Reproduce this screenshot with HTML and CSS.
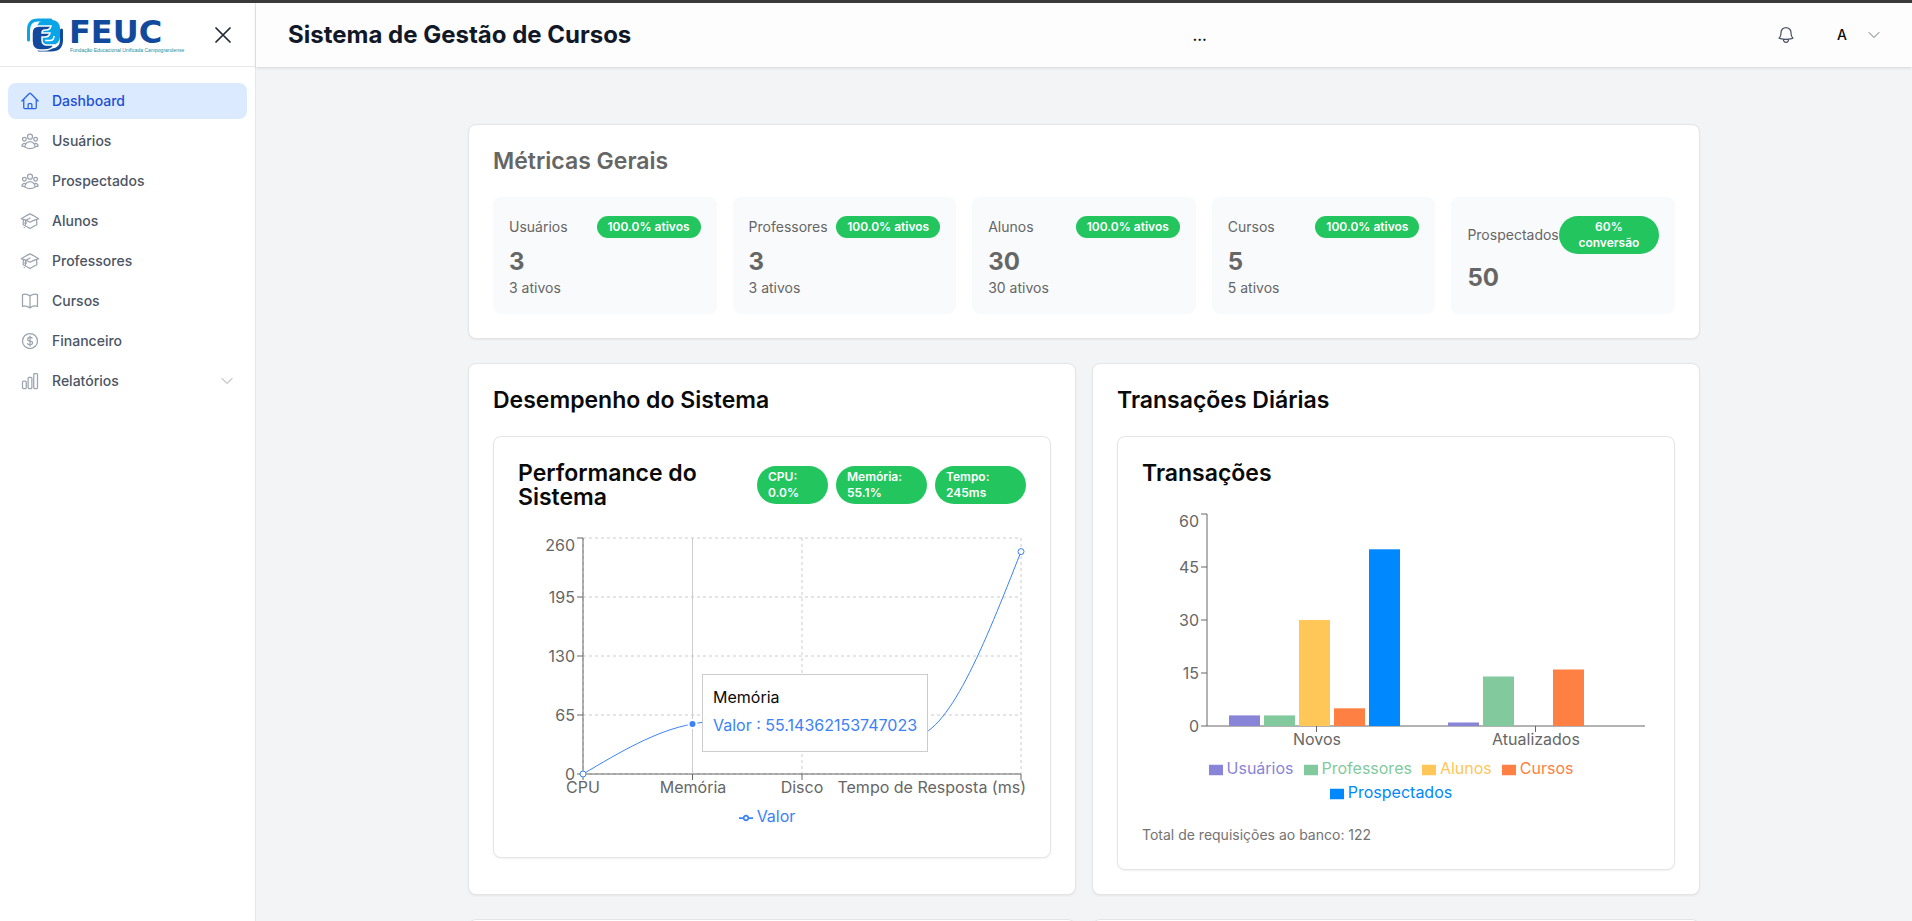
FILE: index.html
```html
<!DOCTYPE html>
<html lang="pt-BR">
<head>
<meta charset="utf-8">
<meta name="viewport" content="width=device-width, initial-scale=1">
<title>Sistema de Gestão de Cursos</title>
<link rel="stylesheet" href="styles.css">
</head>
<body>
<svg class="sprite" aria-hidden="true">
  <symbol id="users" viewBox="0 0 24 24"><path d="M18 18.72a9.094 9.094 0 003.741-.479 3 3 0 00-4.682-2.72m.94 3.198l.001.031c0 .225-.012.447-.037.666A11.944 11.944 0 0112 21c-2.17 0-4.207-.576-5.963-1.584A6.062 6.062 0 016 18.719m12 0a5.971 5.971 0 00-.941-3.197m0 0A5.995 5.995 0 0012 12.75a5.995 5.995 0 00-5.058 2.772m0 0a3 3 0 00-4.681 2.72 8.986 8.986 0 003.74.477m.94-3.197a5.971 5.971 0 00-.94 3.197M15 6.75a3 3 0 11-6 0 3 3 0 016 0zm6 3a2.25 2.25 0 11-4.5 0 2.25 2.25 0 014.5 0zm-13.5 0a2.25 2.25 0 11-4.5 0 2.25 2.25 0 014.5 0z"/></symbol>
  <symbol id="cap" viewBox="0 0 24 24"><path d="M4.26 10.147a60.436 60.436 0 00-.491 6.347A48.627 48.627 0 0112 20.904a48.627 48.627 0 018.232-4.41 60.46 60.46 0 00-.491-6.347m-15.482 0a50.57 50.57 0 00-2.658-.813A59.905 59.905 0 0112 3.493a59.902 59.902 0 0110.399 5.84c-.896.248-1.783.52-2.658.814m-15.482 0A50.697 50.697 0 0112 13.489a50.702 50.702 0 017.74-3.342M6.75 15a.75.75 0 100-1.5.75.75 0 000 1.5zm0 0v-3.675A55.378 55.378 0 0112 8.443m-7.007 11.55A5.981 5.981 0 006.75 15.75v-1.5"/></symbol>
  <symbol id="chevron" viewBox="0 0 24 24"><path d="M19.5 8.25l-7.5 7.5-7.5-7.5"/></symbol>
</svg>
<div class="app">
  <aside class="sidebar">
    <div class="sidebar-head">
      <a class="logo" href="#">
        <svg viewBox="0 0 36 34" width="36" height="34" aria-hidden="true">
          <rect x="10" y="2" width="23" height="25" rx="8" fill="#0aa5e6"/>
          <path d="M1.500 22V12Q1.500 2 11 2H24" fill="none" stroke="#0aa5e6" stroke-width="3" stroke-linecap="round"/>
          <path d="M34.500 12V22Q34.500 32 24 32H12" fill="none" stroke="#114a9c" stroke-width="3" stroke-linecap="round"/>
          <path d="M5 15Q5 8 12 8H24Q23 12 19 12H18Q15 12 15 15H23Q22 19 18 19H15V22Q15 27 20 27H27Q25 32 17 32H13Q5 32 5 23Z" fill="#114a9c" stroke="#fff" stroke-width="1.500"/>
          <path d="M18 22.500H23Q27 22.500 27 18" fill="none" stroke="#fff" stroke-width="1.500"/>
        </svg>
        <span class="logo-text"><span class="logo-name">FEUC</span><span class="logo-sub">Fundação Educacional Unificada Campograndense</span></span>
      </a>
      <button class="icon-btn" type="button" aria-label="Fechar menu">
        <svg class="icon icon-close" viewBox="0 0 24 24"><path d="M6 18L18 6M6 6l12 12"/></svg>
      </button>
    </div>
    <nav class="nav">
      <a class="nav-item active" href="#"><svg class="icon" viewBox="0 0 24 24"><path d="M2.25 12l8.954-8.955c.44-.439 1.152-.439 1.591 0L21.75 12M4.5 9.75v10.125c0 .621.504 1.125 1.125 1.125H9.75v-4.875c0-.621.504-1.125 1.125-1.125h2.25c.621 0 1.125.504 1.125 1.125V21h4.125c.621 0 1.125-.504 1.125-1.125V9.75M8.25 21h8.25"/></svg>Dashboard</a>
      <a class="nav-item" href="#"><svg class="icon"><use href="#users"/></svg>Usuários</a>
      <a class="nav-item" href="#"><svg class="icon"><use href="#users"/></svg>Prospectados</a>
      <a class="nav-item" href="#"><svg class="icon"><use href="#cap"/></svg>Alunos</a>
      <a class="nav-item" href="#"><svg class="icon"><use href="#cap"/></svg>Professores</a>
      <a class="nav-item" href="#"><svg class="icon" viewBox="0 0 24 24"><path d="M12 6.042A8.967 8.967 0 006 3.75c-1.052 0-2.062.18-3 .512v14.25A8.987 8.987 0 016 18c2.305 0 4.408.867 6 2.292m0-14.25a8.966 8.966 0 016-2.292c1.052 0 2.062.18 3 .512v14.25A8.987 8.987 0 0018 18a8.967 8.967 0 00-6 2.292m0-14.25v14.25"/></svg>Cursos</a>
      <a class="nav-item" href="#"><svg class="icon" viewBox="0 0 24 24"><path d="M12 6v12m-3-2.818l.879.659c1.171.879 3.07.879 4.242 0 1.172-.879 1.172-2.303 0-3.182C13.536 12.219 12.768 12 12 12c-.725 0-1.45-.22-2.003-.659-1.106-.879-1.106-2.303 0-3.182s2.9-.879 4.006 0l.415.33M21 12a9 9 0 11-18 0 9 9 0 0118 0z"/></svg>Financeiro</a>
      <button class="nav-item" type="button"><svg class="icon" viewBox="0 0 24 24"><path d="M3 13.125C3 12.504 3.504 12 4.125 12h2.25c.621 0 1.125.504 1.125 1.125v6.75C7.5 20.496 6.996 21 6.375 21h-2.25A1.125 1.125 0 013 19.875v-6.75zM9.75 8.625c0-.621.504-1.125 1.125-1.125h2.25c.621 0 1.125.504 1.125 1.125v11.25c0 .621-.504 1.125-1.125 1.125h-2.25a1.125 1.125 0 01-1.125-1.125V8.625zM16.5 4.125c0-.621.504-1.125 1.125-1.125h2.25C20.496 3 21 3.504 21 4.125v15.75c0 .621-.504 1.125-1.125 1.125h-2.25a1.125 1.125 0 01-1.125-1.125V4.125z"/></svg>Relatórios<svg class="icon icon-small"><use href="#chevron"/></svg></button>
    </nav>
  </aside>

  <div class="page">
    <header class="topbar">
      <h1>Sistema de Gestão de Cursos</h1>
      <span class="topbar-status">...</span>
      <div class="topbar-actions">
        <button class="icon-btn" type="button" aria-label="Notificações"><svg class="icon" viewBox="0 0 24 24"><path d="M14.857 17.082a23.848 23.848 0 005.454-1.31A8.967 8.967 0 0118 9.75v-.7V9A6 6 0 006 9v.75a8.967 8.967 0 01-2.312 6.022c1.733.64 3.56 1.085 5.455 1.31m5.714 0a24.255 24.255 0 01-5.714 0m5.714 0a3 3 0 11-5.714 0"/></svg></button>
        <button class="user-btn" type="button">A<svg class="icon icon-small"><use href="#chevron"/></svg></button>
      </div>
    </header>

    <main class="content">
      <section class="card metrics-card">
        <h2>Métricas Gerais</h2>
        <div class="metrics">
          <div class="metric"><div class="metric-head"><span>Usuários</span><span class="badge">100.0% ativos</span></div><strong>3</strong><p>3 ativos</p></div>
          <div class="metric"><div class="metric-head"><span>Professores</span><span class="badge">100.0% ativos</span></div><strong>3</strong><p>3 ativos</p></div>
          <div class="metric"><div class="metric-head"><span>Alunos</span><span class="badge">100.0% ativos</span></div><strong>30</strong><p>30 ativos</p></div>
          <div class="metric"><div class="metric-head"><span>Cursos</span><span class="badge">100.0% ativos</span></div><strong>5</strong><p>5 ativos</p></div>
          <div class="metric"><div class="metric-head"><span>Prospectados</span><span class="badge">60% conversão</span></div><strong>50</strong></div>
        </div>
      </section>

      <div class="panels">
        <section class="card">
          <h2>Desempenho do Sistema</h2>
          <div class="card">
            <div class="panel-head">
              <h3>Performance do Sistema</h3>
              <div class="badges">
                <span class="badge stacked">CPU:<br>0.0%</span>
                <span class="badge stacked wide">Memória:<br>55.1%</span>
                <span class="badge stacked wide">Tempo:<br>245ms</span>
              </div>
            </div>
            <div class="chart">
              <svg class="plot" viewBox="0 0 508 271" role="img" aria-label="Performance do Sistema">
                <path class="grid" d="M65 241H503M65 182H503M65 123H503M65 64H503M65 5H503M65 5V241M284 5V241M503 5V241"/>
                <path class="axis" d="M65 5V241M65 241H503M59 5H65M59 64H65M59 123H65M59 182H65M59 241H65M65 241V247M174.5 241V247M284 241V247M503 241V247"/>
                <path class="cursor" d="M174.5 5V241"/>
                <path class="line" d="M65 241C101.5 219.3 138 197.6 174.5 191C211 184.4 247.5 181 284 181C320.5 181 357 204 393.5 204C430 204 466.5 111.3 503 18.6"/>
                <circle class="dot" cx="65" cy="241" r="3"/>
                <circle class="dot-active" cx="174.5" cy="191" r="4"/>
                <circle class="dot" cx="503" cy="18.6" r="3"/>
                <g class="ticks end"><text x="57" y="18">260</text><text x="57" y="70">195</text><text x="57" y="129">130</text><text x="57" y="188">65</text><text x="57" y="247">0</text></g>
                <g class="ticks"><text x="65" y="260">CPU</text><text x="175" y="260">Memória</text><text x="284" y="260">Disco</text></g>
                <g class="ticks end"><text x="508" y="260">Tempo de Resposta (ms)</text></g>
              </svg>
              <ul class="legend">
                <li class="c-valor"><svg viewBox="0 0 32 32"><path d="M0 16h10.67A5.33 5.33 0 1 1 21.33 16H32M21.33 16A5.33 5.33 0 1 1 10.67 16" fill="none" stroke="currentColor" stroke-width="4"/></svg>Valor</li>
              </ul>
              <div class="tooltip"><p>Memória</p><p class="c-valor">Valor : 55.14362153747023</p></div>
            </div>
          </div>
        </section>

        <section class="card">
          <h2>Transações Diárias</h2>
          <div class="card">
            <div class="panel-head"><h3>Transações</h3></div>
            <div class="chart">
              <svg class="plot" viewBox="0 0 508 247" role="img" aria-label="Transações">
                <path class="axis" d="M65 5V217M65 217H503M59 5H65M59 58H65M59 111H65M59 164H65M59 217H65M174.5 217V223M393.5 217V223"/>
                <g class="c-usuarios"><rect x="87" y="206.4" width="31" height="10.6"/><rect x="306" y="213.5" width="31" height="3.5"/></g>
                <g class="c-professores"><rect x="122" y="206.4" width="31" height="10.6"/><rect x="341" y="167.5" width="31" height="49.5"/></g>
                <g class="c-alunos"><rect x="157" y="111" width="31" height="106"/></g>
                <g class="c-cursos"><rect x="192" y="199.3" width="31" height="17.7"/><rect x="411" y="160.5" width="31" height="56.5"/></g>
                <g class="c-prospectados"><rect x="227" y="40.3" width="31" height="176.7"/></g>
                <g class="ticks end"><text x="57" y="18">60</text><text x="57" y="64">45</text><text x="57" y="117">30</text><text x="57" y="170">15</text><text x="57" y="223">0</text></g>
                <g class="ticks"><text x="175" y="236">Novos</text><text x="394" y="236">Atualizados</text></g>
              </svg>
              <ul class="legend">
                <li class="c-usuarios"><svg viewBox="0 0 32 32"><path d="M0 4h32v24H0z"/></svg>Usuários</li>
                <li class="c-professores"><svg viewBox="0 0 32 32"><path d="M0 4h32v24H0z"/></svg>Professores</li>
                <li class="c-alunos"><svg viewBox="0 0 32 32"><path d="M0 4h32v24H0z"/></svg>Alunos</li>
                <li class="c-cursos"><svg viewBox="0 0 32 32"><path d="M0 4h32v24H0z"/></svg>Cursos</li>
                <li class="c-prospectados"><svg viewBox="0 0 32 32"><path d="M0 4h32v24H0z"/></svg>Prospectados</li>
              </ul>
            </div>
            <p class="total">Total de requisições ao banco: 122</p>
          </div>
        </section>

        <section class="card"></section>
        <section class="card"></section>
      </div>
    </main>
  </div>
</div>
</body>
</html>
```

FILE: styles.css
```css
*, *::before, *::after { box-sizing: border-box; }
body, h1, h2, h3, p, ul { margin: 0; }
body { font: 16px/24px Inter, "Liberation Sans", sans-serif; color: #0a0a0a; background: #f3f4f6; }
button { font: inherit; color: inherit; background: none; border: 0; padding: 0; }
a { color: inherit; text-decoration: none; }

.sprite { position: absolute; width: 0; height: 0; }
.icon { width: 20px; height: 20px; flex: none; display: block; fill: none; stroke: currentColor; stroke-width: 1.5; stroke-linecap: round; stroke-linejoin: round; }
.icon-small { width: 16px; height: 16px; }
.icon-close { width: 28px; height: 28px; }
.icon-btn { display: flex; color: #4b5563; }

.app { display: flex; height: 100vh; border-top: 3px solid #3a3a3a; overflow: hidden; }

.sidebar { width: 256px; flex: none; background: #fff; border-right: 1px solid #e5e7eb; }
.sidebar-head { display: flex; align-items: center; justify-content: space-between; height: 64px; padding: 0 18px 0 27px; border-bottom: 1px solid #e5e7eb; }
.sidebar-head .icon-btn { color: #1f2937; }
.logo { display: flex; align-items: center; gap: 6px; }
.logo svg { display: block; flex: none; }
.logo-text { display: flex; flex-direction: column; white-space: nowrap; }
.logo-name { font: bold 32px/30px "DejaVu Sans", sans-serif; color: #114a9c; }
.logo-sub { font: 5px/6px "Liberation Sans", sans-serif; color: #1690a0; padding-left: 1px; }
.nav { display: flex; flex-direction: column; gap: 4px; padding: 16px 8px; }
.nav-item { display: flex; align-items: center; gap: 12px; height: 36px; padding: 0 12px; border-radius: 8px; font-size: 14px; font-weight: 500; color: #4b5563; text-align: left; }
.nav-item .icon { color: #9ca3af; }
.nav-item .icon-small { margin-left: auto; }
.nav-item.active { background: #dbeafe; color: #1d4ed8; }
.nav-item.active .icon { color: #2563eb; }

.page { flex: 1; min-width: 0; display: flex; flex-direction: column; }
.topbar { display: flex; align-items: center; justify-content: space-between; flex: none; height: 64px; padding: 0 30px 0 32px; background: #fdfdfd; box-shadow: 0 1px 3px rgba(0, 0, 0, .12); }
.topbar h1 { font-size: 24px; line-height: 32px; font-weight: 700; color: #111827; }
.topbar-status { font-weight: 500; }
.topbar-actions { display: flex; align-items: center; gap: 41px; padding-left: 8px; }
.user-btn { display: flex; align-items: center; gap: 19px; font-size: 14px; font-weight: 500; }
.user-btn .icon { color: #6b7280; }

.content { flex: 1; min-height: 0; width: 100%; max-width: 1280px; margin: 0 auto; padding: 57px 24px 0; display: flex; flex-direction: column; gap: 24px; overflow: hidden; }
.card { background: #fff; border: 1px solid #e5e5e5; border-radius: 8px; padding: 24px; box-shadow: 0 1px 2px rgba(0, 0, 0, .06); }
.content > * { flex: none; }
h2, h3 { font-size: 23px; line-height: 24px; font-weight: 600; }
h2 { margin-bottom: 24px; }
.metrics-card { color: #666; }
.metrics { display: grid; grid-template-columns: repeat(5, minmax(0, 1fr)); gap: 16px; }
.metric { padding: 19px 16px 16px; border-radius: 8px; background: #f9fafb; font-size: 14px; line-height: 20px; }
.metric-head { display: flex; align-items: center; justify-content: space-between; margin-bottom: 8px; }
.metric strong { display: block; font-size: 24px; line-height: 32px; font-weight: 700; }
.badge { border-radius: 20px; padding: 3px 11px; background: #22c55e; color: #fff; font-size: 12px; line-height: 16px; font-weight: 600; text-align: center; }

.panels { display: grid; grid-template-columns: repeat(2, minmax(0, 1fr)); gap: 24px 16px; align-items: stretch; }
.panels .card { min-height: 50px; }
.panels .card .card { min-height: 0; }
.panel-head { display: flex; align-items: center; justify-content: space-between; margin-bottom: 24px; }
.panel-head h3 { max-width: 240px; }
.badges { display: flex; gap: 8px; }
.badge.stacked { width: 71px; text-align: left; }
.badge.stacked.wide { width: 91px; }

.chart { position: relative; padding-bottom: 5px; }
.plot { display: block; width: 100%; height: auto; }
.grid { fill: none; stroke: #ccc; stroke-dasharray: 3 3; }
.axis { fill: none; stroke: #666; }
.cursor { fill: none; stroke: #ccc; }
.line { fill: none; stroke: #3b82f6; }
.dot { fill: #fff; stroke: #3b82f6; }
.dot-active { fill: #3b82f6; stroke: #fff; stroke-width: 2; }
.ticks { font-size: 16px; fill: #666; text-anchor: middle; }
.ticks.end { text-anchor: end; }
.legend { display: flex; flex-wrap: wrap; justify-content: center; list-style: none; padding: 0 5px; }
.legend li { display: flex; align-items: center; gap: 4px; margin-right: 10px; }
.legend svg { width: 14px; height: 14px; margin-top: 3px; fill: currentColor; }
.c-usuarios { color: #8884d8; fill: #8884d8; }
.c-professores { color: #82ca9d; fill: #82ca9d; }
.c-alunos { color: #ffc658; fill: #ffc658; }
.c-cursos { color: #ff8042; fill: #ff8042; }
.c-prospectados { color: #0088fe; fill: #0088fe; }
.c-valor { color: #3b82f6; }
.tooltip { position: absolute; left: 184px; top: 141px; display: grid; gap: 4px; padding: 10px 10px 14px; background: #fff; border: 1px solid #ccc; white-space: nowrap; }
.total { margin-top: 16px; font-size: 14px; line-height: 20px; color: #737373; }
```
